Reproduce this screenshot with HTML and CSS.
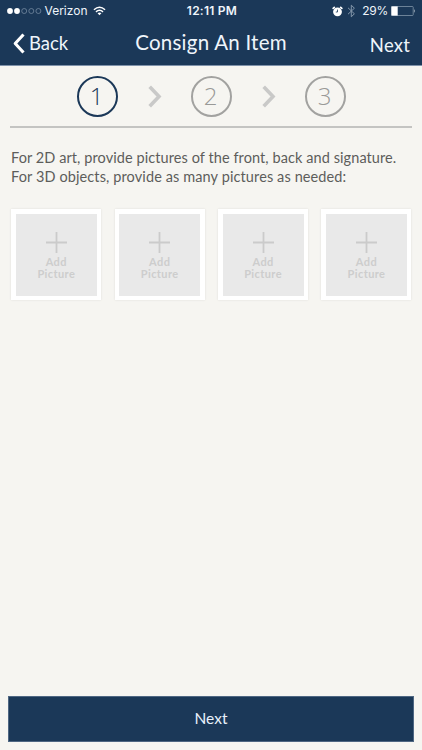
FILE: index.html
```html
<!DOCTYPE html>
<html lang="en">
<head>
<meta charset="utf-8">
<title>Consign An Item</title>
<link rel="stylesheet" href="styles.css">
</head>
<body>
<header class="header">
  <div class="status">
    <div class="status-left">
      <svg class="signal" width="35" height="8" viewBox="0 0 35 8"><circle cx="3" cy="4" r="2.9" fill="#fff"/><circle cx="10" cy="4" r="2.9" fill="#fff"/><g fill="none" stroke="#8094a9" stroke-width=".7"><circle cx="17.2" cy="4" r="2.5"/><circle cx="24.3" cy="4" r="2.5"/><circle cx="31.4" cy="4" r="2.5"/></g></svg>
      <span class="carrier">Verizon</span>
      <svg width="13" height="10" viewBox="0 0 14 10"><g fill="none" stroke="#fff" stroke-width="1.6"><path d="M1 3.6Q7-1.5 13 3.6"/><path d="M3.2 5.9Q7 2.6 10.8 5.9"/></g><path d="M4.9 7.4Q7 5.8 9.1 7.4L7 9.6Z" fill="#fff"/></svg>
    </div>
    <div class="clock">12:11 PM</div>
    <div class="status-right">
      <svg width="11" height="11" viewBox="0 0 11 11"><circle cx="5.5" cy="5.8" r="4.4" fill="#fff"/><path d="M1.2 2.4 2.3 1.4M9.8 2.4 8.7 1.4" stroke="#fff" stroke-width="1.7" stroke-linecap="round"/><path d="M5.5 3.6V6H3.8" fill="none" stroke="#1b3858" stroke-width=".8"/></svg>
      <svg class="bluetooth" width="9" height="14" viewBox="0 0 9 14"><path d="M1 3.8 7.4 9.8 4.3 12.8V1.2L7.4 4.2 1 10.2" fill="none" stroke="#8497aa"/></svg>
      <span class="percent">29%</span>
      <svg class="battery" width="25" height="10" viewBox="0 0 25 10"><rect x=".5" y=".5" width="21.7" height="9" rx=".7" fill="none" stroke="#8195a8" stroke-width=".8"/><rect x=".4" y=".4" width="6.3" height="9.2" fill="#fff"/><path d="M23.2 3.1q1.6 1.9 0 3.8z" fill="#b9c4d0"/></svg>
    </div>
  </div>
  <nav class="nav">
    <a class="back"><svg width="12" height="21" viewBox="0 0 12 21"><path d="M10.5 1.5 2.2 10.5l8.3 9" fill="none" stroke="#fff" stroke-width="3.1" stroke-linejoin="round"/></svg><span>Back</span></a>
    <h1 class="title">Consign An Item</h1>
    <a class="nav-next">Next</a>
  </nav>
</header>
<main class="main">
  <div class="steps">
    <span class="step active">1</span>
    <svg class="chevron" width="14" height="23" viewBox="0 0 14 23"><path d="M1.7 1.7 11 11.5 1.7 21.3"/></svg>
    <span class="step">2</span>
    <svg class="chevron" width="14" height="23" viewBox="0 0 14 23"><path d="M1.7 1.7 11 11.5 1.7 21.3"/></svg>
    <span class="step">3</span>
  </div>
  <p class="hint"><span class="line-one">For 2D art, provide pictures of the front, back and signature.</span><br><span class="line-two">For 3D objects, provide as many pictures as needed:</span></p>
  <div class="pictures">
    <div class="card"><div class="slot"><svg class="plus" width="21" height="21" viewBox="0 0 21 21"><path d="M0 10.5h21M10.5 0v21"/></svg><span>Add<br>Picture</span></div></div>
    <div class="card"><div class="slot"><svg class="plus" width="21" height="21" viewBox="0 0 21 21"><path d="M0 10.5h21M10.5 0v21"/></svg><span>Add<br>Picture</span></div></div>
    <div class="card"><div class="slot"><svg class="plus" width="21" height="21" viewBox="0 0 21 21"><path d="M0 10.5h21M10.5 0v21"/></svg><span>Add<br>Picture</span></div></div>
    <div class="card"><div class="slot"><svg class="plus" width="21" height="21" viewBox="0 0 21 21"><path d="M0 10.5h21M10.5 0v21"/></svg><span>Add<br>Picture</span></div></div>
  </div>
</main>
<button class="next-button">Next</button>
</body>
</html>
```
FILE: styles.css
```css
* { box-sizing: border-box; }
body {
  margin: 0;
  height: 750px;
  display: flex;
  flex-direction: column;
  background: #f6f5f1;
  font-family: Lato, "Liberation Sans", sans-serif;
  overflow: hidden;
}
svg { display: block; flex: none; }
.header {
  height: 66px;
  background: #1b3858;
  border-bottom: 1px solid #7f92aa;
  color: #eff5fb;
}
.status {
  height: 22px;
  display: grid;
  grid-template-columns: 1fr auto 1fr;
  align-items: center;
  padding: 0 6px 0 7px;
  font: 12px/22px Inter, sans-serif;
}
.status-left, .status-right { display: flex; align-items: center; }
.status-right { justify-content: flex-end; }
.carrier { margin: 0 5px 0 2.5px; }
.clock { padding-left: 1px; font-weight: 600; letter-spacing: .25px; }
.bluetooth { margin-left: 4px; }
.percent { margin: 0 3px 0 6px; letter-spacing: -.3px; }
.nav {
  height: 43px;
  display: grid;
  grid-template-columns: 1fr auto 1fr;
  align-items: center;
  padding: 0 12px 2px 13px;
}
.back { display: flex; align-items: center; gap: 4px; font-size: 18.5px; line-height: 40px; }
.back svg { margin-top: 1px; }
.title { margin: 0 1px 1px 0; font-size: 20.5px; line-height: 40px; font-weight: 400; letter-spacing: .25px; }
.nav-next { justify-self: end; font-size: 18.5px; padding-top: 4px; letter-spacing: .2px; }
.main { flex: 1; padding: 0 10px; }
.steps {
  height: 62px;
  display: flex;
  align-items: center;
  justify-content: center;
  gap: 30px;
  border-bottom: 2px solid #c4c4c2;
}
.step {
  width: 41px;
  height: 41px;
  border: 1.5px solid #999997;
  border-width: 2px;
  border-color: #a2a2a0;
  border-radius: 50%;
  padding-right: 1px;
  text-align: center;
  color: #999997;
  font: 300 24px/35px "Open Sans", sans-serif;
}
.step.active { border-color: #1b3858; color: #1b3858; }
.chevron { fill: none; stroke: #c9c9c8; stroke-width: 3.6; margin-right: -1px; }
.hint { margin: 20px 0 0 1px; color: #5d5d5b; font-size: 14.5px; line-height: 19px; white-space: nowrap; }
.line-one { letter-spacing: .08px; }
.line-two { letter-spacing: .11px; }
.pictures { display: grid; grid-template-columns: repeat(4, 90px); justify-content: space-between; margin: 23px .5px 0 1.3px; }
.card {
  height: 91px;
  padding: 5px 4.5px;
  background: #fff;
  box-shadow: 0 0 2px #dcdcda;
}
.slot {
  height: 82px;
  padding-top: 18px;
  display: flex;
  flex-direction: column;
  align-items: center;
  background: #e9e9e9;
  color: #cdcdcd;
  text-align: center;
  font-size: 11px;
  line-height: 12px;
  font-weight: 700;
  letter-spacing: .4px;
}
.plus { stroke: #cbcbcb; stroke-width: 1.8; margin-bottom: 3px; }
.next-button {
  flex: none;
  height: 46px;
  margin: 0 8px 8px;
  padding: 0 0 2px;
  border: 1px solid #4f6783;
  background: #1b3858;
  color: #e8f1fb;
  font: 15.5px Lato, sans-serif;
}
```
